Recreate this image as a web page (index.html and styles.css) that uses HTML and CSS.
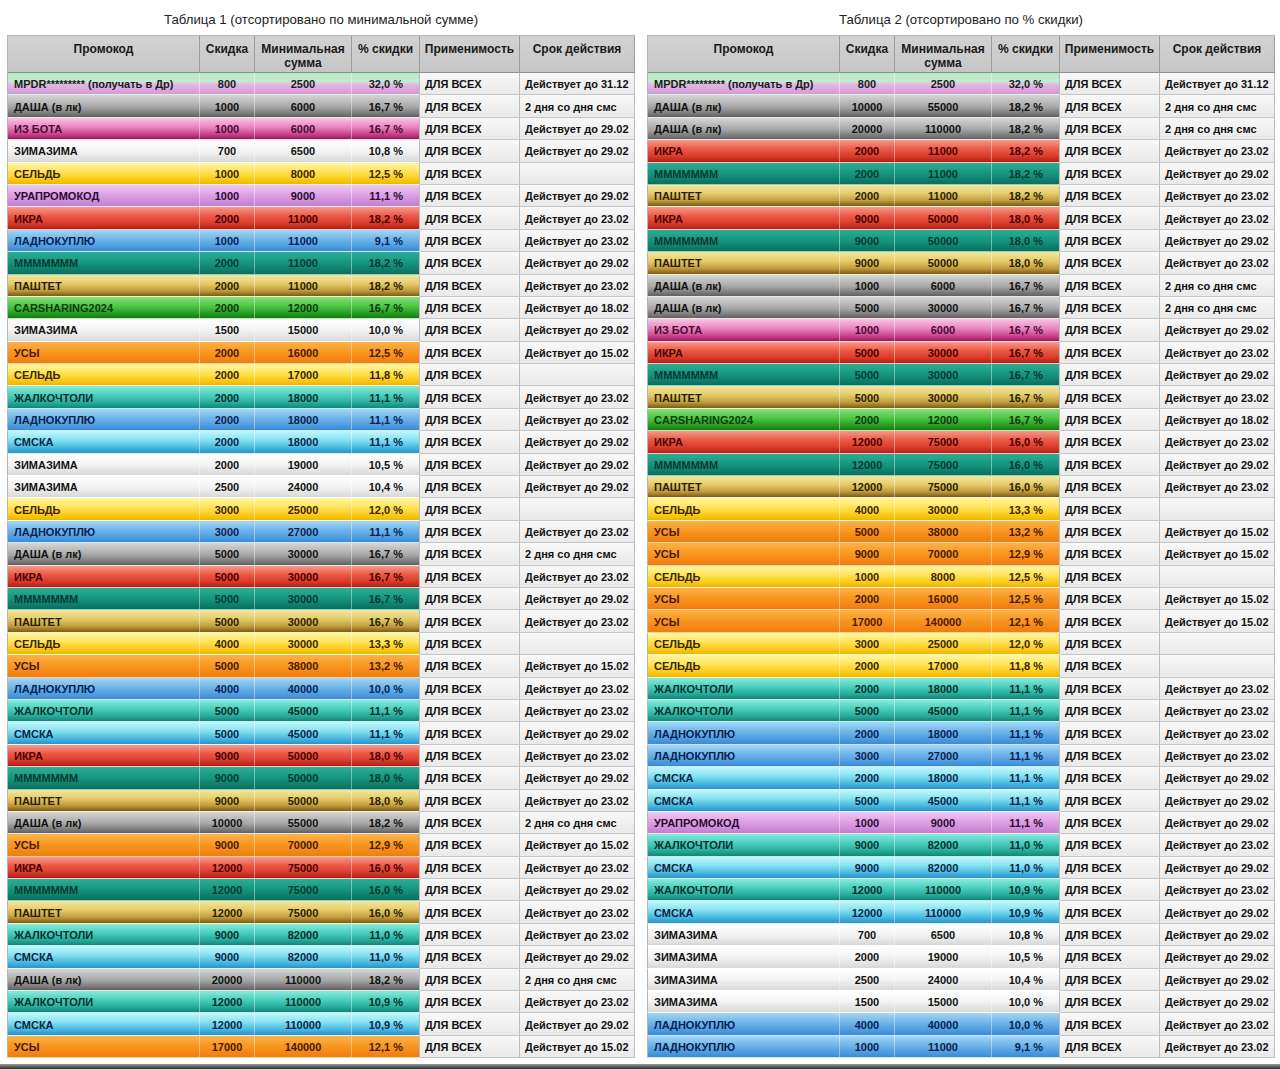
FILE: index.html
```html
<!DOCTYPE html>
<html lang="ru">
<head>
<meta charset="utf-8">
<title>Промокоды</title>
<link rel="stylesheet" href="styles.css">
</head>
<body>
<div class="page">
  <section class="block">
    <h2 class="title">Таблица 1 (отсортировано по минимальной сумме)</h2>
    <div class="tbl">
      <div class="hd"><span>Промокод</span><span>Скидка</span><span>Минимальная сумма</span><span>% скидки</span><span>Применимость</span><span>Срок действия</span></div>
      <div class="r mpdr"><span>MPDR********* (получать в Др)</span><span>800</span><span>2500</span><span>32,0 %</span><span>ДЛЯ ВСЕХ</span><span>Действует до 31.12</span></div>
      <div class="r dasha"><span>ДАША (в лк)</span><span>1000</span><span>6000</span><span>16,7 %</span><span>ДЛЯ ВСЕХ</span><span>2 дня со дня смс</span></div>
      <div class="r izbota"><span>ИЗ БОТА</span><span>1000</span><span>6000</span><span>16,7 %</span><span>ДЛЯ ВСЕХ</span><span>Действует до 29.02</span></div>
      <div class="r zima"><span>ЗИМАЗИМА</span><span>700</span><span>6500</span><span>10,8 %</span><span>ДЛЯ ВСЕХ</span><span>Действует до 29.02</span></div>
      <div class="r seld"><span>СЕЛЬДЬ</span><span>1000</span><span>8000</span><span>12,5 %</span><span>ДЛЯ ВСЕХ</span><span></span></div>
      <div class="r ura"><span>УРАПРОМОКОД</span><span>1000</span><span>9000</span><span>11,1 %</span><span>ДЛЯ ВСЕХ</span><span>Действует до 29.02</span></div>
      <div class="r ikra"><span>ИКРА</span><span>2000</span><span>11000</span><span>18,2 %</span><span>ДЛЯ ВСЕХ</span><span>Действует до 23.02</span></div>
      <div class="r ladno"><span>ЛАДНОКУПЛЮ</span><span>1000</span><span>11000</span><span>9,1 %</span><span>ДЛЯ ВСЕХ</span><span>Действует до 23.02</span></div>
      <div class="r mmm"><span>МММММММ</span><span>2000</span><span>11000</span><span>18,2 %</span><span>ДЛЯ ВСЕХ</span><span>Действует до 29.02</span></div>
      <div class="r pashtet"><span>ПАШТЕТ</span><span>2000</span><span>11000</span><span>18,2 %</span><span>ДЛЯ ВСЕХ</span><span>Действует до 23.02</span></div>
      <div class="r car"><span>CARSHARING2024</span><span>2000</span><span>12000</span><span>16,7 %</span><span>ДЛЯ ВСЕХ</span><span>Действует до 18.02</span></div>
      <div class="r zima"><span>ЗИМАЗИМА</span><span>1500</span><span>15000</span><span>10,0 %</span><span>ДЛЯ ВСЕХ</span><span>Действует до 29.02</span></div>
      <div class="r usy"><span>УСЫ</span><span>2000</span><span>16000</span><span>12,5 %</span><span>ДЛЯ ВСЕХ</span><span>Действует до 15.02</span></div>
      <div class="r seld"><span>СЕЛЬДЬ</span><span>2000</span><span>17000</span><span>11,8 %</span><span>ДЛЯ ВСЕХ</span><span></span></div>
      <div class="r zhalko"><span>ЖАЛКОЧТОЛИ</span><span>2000</span><span>18000</span><span>11,1 %</span><span>ДЛЯ ВСЕХ</span><span>Действует до 23.02</span></div>
      <div class="r ladno"><span>ЛАДНОКУПЛЮ</span><span>2000</span><span>18000</span><span>11,1 %</span><span>ДЛЯ ВСЕХ</span><span>Действует до 23.02</span></div>
      <div class="r smska"><span>СМСКА</span><span>2000</span><span>18000</span><span>11,1 %</span><span>ДЛЯ ВСЕХ</span><span>Действует до 29.02</span></div>
      <div class="r zima"><span>ЗИМАЗИМА</span><span>2000</span><span>19000</span><span>10,5 %</span><span>ДЛЯ ВСЕХ</span><span>Действует до 29.02</span></div>
      <div class="r zima"><span>ЗИМАЗИМА</span><span>2500</span><span>24000</span><span>10,4 %</span><span>ДЛЯ ВСЕХ</span><span>Действует до 29.02</span></div>
      <div class="r seld"><span>СЕЛЬДЬ</span><span>3000</span><span>25000</span><span>12,0 %</span><span>ДЛЯ ВСЕХ</span><span></span></div>
      <div class="r ladno"><span>ЛАДНОКУПЛЮ</span><span>3000</span><span>27000</span><span>11,1 %</span><span>ДЛЯ ВСЕХ</span><span>Действует до 23.02</span></div>
      <div class="r dasha"><span>ДАША (в лк)</span><span>5000</span><span>30000</span><span>16,7 %</span><span>ДЛЯ ВСЕХ</span><span>2 дня со дня смс</span></div>
      <div class="r ikra"><span>ИКРА</span><span>5000</span><span>30000</span><span>16,7 %</span><span>ДЛЯ ВСЕХ</span><span>Действует до 23.02</span></div>
      <div class="r mmm"><span>МММММММ</span><span>5000</span><span>30000</span><span>16,7 %</span><span>ДЛЯ ВСЕХ</span><span>Действует до 29.02</span></div>
      <div class="r pashtet"><span>ПАШТЕТ</span><span>5000</span><span>30000</span><span>16,7 %</span><span>ДЛЯ ВСЕХ</span><span>Действует до 23.02</span></div>
      <div class="r seld"><span>СЕЛЬДЬ</span><span>4000</span><span>30000</span><span>13,3 %</span><span>ДЛЯ ВСЕХ</span><span></span></div>
      <div class="r usy"><span>УСЫ</span><span>5000</span><span>38000</span><span>13,2 %</span><span>ДЛЯ ВСЕХ</span><span>Действует до 15.02</span></div>
      <div class="r ladno"><span>ЛАДНОКУПЛЮ</span><span>4000</span><span>40000</span><span>10,0 %</span><span>ДЛЯ ВСЕХ</span><span>Действует до 23.02</span></div>
      <div class="r zhalko"><span>ЖАЛКОЧТОЛИ</span><span>5000</span><span>45000</span><span>11,1 %</span><span>ДЛЯ ВСЕХ</span><span>Действует до 23.02</span></div>
      <div class="r smska"><span>СМСКА</span><span>5000</span><span>45000</span><span>11,1 %</span><span>ДЛЯ ВСЕХ</span><span>Действует до 29.02</span></div>
      <div class="r ikra"><span>ИКРА</span><span>9000</span><span>50000</span><span>18,0 %</span><span>ДЛЯ ВСЕХ</span><span>Действует до 23.02</span></div>
      <div class="r mmm"><span>МММММММ</span><span>9000</span><span>50000</span><span>18,0 %</span><span>ДЛЯ ВСЕХ</span><span>Действует до 29.02</span></div>
      <div class="r pashtet"><span>ПАШТЕТ</span><span>9000</span><span>50000</span><span>18,0 %</span><span>ДЛЯ ВСЕХ</span><span>Действует до 23.02</span></div>
      <div class="r dasha"><span>ДАША (в лк)</span><span>10000</span><span>55000</span><span>18,2 %</span><span>ДЛЯ ВСЕХ</span><span>2 дня со дня смс</span></div>
      <div class="r usy"><span>УСЫ</span><span>9000</span><span>70000</span><span>12,9 %</span><span>ДЛЯ ВСЕХ</span><span>Действует до 15.02</span></div>
      <div class="r ikra"><span>ИКРА</span><span>12000</span><span>75000</span><span>16,0 %</span><span>ДЛЯ ВСЕХ</span><span>Действует до 23.02</span></div>
      <div class="r mmm"><span>МММММММ</span><span>12000</span><span>75000</span><span>16,0 %</span><span>ДЛЯ ВСЕХ</span><span>Действует до 29.02</span></div>
      <div class="r pashtet"><span>ПАШТЕТ</span><span>12000</span><span>75000</span><span>16,0 %</span><span>ДЛЯ ВСЕХ</span><span>Действует до 23.02</span></div>
      <div class="r zhalko"><span>ЖАЛКОЧТОЛИ</span><span>9000</span><span>82000</span><span>11,0 %</span><span>ДЛЯ ВСЕХ</span><span>Действует до 23.02</span></div>
      <div class="r smska"><span>СМСКА</span><span>9000</span><span>82000</span><span>11,0 %</span><span>ДЛЯ ВСЕХ</span><span>Действует до 29.02</span></div>
      <div class="r dasha"><span>ДАША (в лк)</span><span>20000</span><span>110000</span><span>18,2 %</span><span>ДЛЯ ВСЕХ</span><span>2 дня со дня смс</span></div>
      <div class="r zhalko"><span>ЖАЛКОЧТОЛИ</span><span>12000</span><span>110000</span><span>10,9 %</span><span>ДЛЯ ВСЕХ</span><span>Действует до 23.02</span></div>
      <div class="r smska"><span>СМСКА</span><span>12000</span><span>110000</span><span>10,9 %</span><span>ДЛЯ ВСЕХ</span><span>Действует до 29.02</span></div>
      <div class="r usy"><span>УСЫ</span><span>17000</span><span>140000</span><span>12,1 %</span><span>ДЛЯ ВСЕХ</span><span>Действует до 15.02</span></div>
    </div>
  </section>

  <section class="block">
    <h2 class="title">Таблица 2 (отсортировано по % скидки)</h2>
    <div class="tbl">
      <div class="hd"><span>Промокод</span><span>Скидка</span><span>Минимальная сумма</span><span>% скидки</span><span>Применимость</span><span>Срок действия</span></div>
      <div class="r mpdr"><span>MPDR********* (получать в Др)</span><span>800</span><span>2500</span><span>32,0 %</span><span>ДЛЯ ВСЕХ</span><span>Действует до 31.12</span></div>
      <div class="r dasha"><span>ДАША (в лк)</span><span>10000</span><span>55000</span><span>18,2 %</span><span>ДЛЯ ВСЕХ</span><span>2 дня со дня смс</span></div>
      <div class="r dasha"><span>ДАША (в лк)</span><span>20000</span><span>110000</span><span>18,2 %</span><span>ДЛЯ ВСЕХ</span><span>2 дня со дня смс</span></div>
      <div class="r ikra"><span>ИКРА</span><span>2000</span><span>11000</span><span>18,2 %</span><span>ДЛЯ ВСЕХ</span><span>Действует до 23.02</span></div>
      <div class="r mmm"><span>МММММММ</span><span>2000</span><span>11000</span><span>18,2 %</span><span>ДЛЯ ВСЕХ</span><span>Действует до 29.02</span></div>
      <div class="r pashtet"><span>ПАШТЕТ</span><span>2000</span><span>11000</span><span>18,2 %</span><span>ДЛЯ ВСЕХ</span><span>Действует до 23.02</span></div>
      <div class="r ikra"><span>ИКРА</span><span>9000</span><span>50000</span><span>18,0 %</span><span>ДЛЯ ВСЕХ</span><span>Действует до 23.02</span></div>
      <div class="r mmm"><span>МММММММ</span><span>9000</span><span>50000</span><span>18,0 %</span><span>ДЛЯ ВСЕХ</span><span>Действует до 29.02</span></div>
      <div class="r pashtet"><span>ПАШТЕТ</span><span>9000</span><span>50000</span><span>18,0 %</span><span>ДЛЯ ВСЕХ</span><span>Действует до 23.02</span></div>
      <div class="r dasha"><span>ДАША (в лк)</span><span>1000</span><span>6000</span><span>16,7 %</span><span>ДЛЯ ВСЕХ</span><span>2 дня со дня смс</span></div>
      <div class="r dasha"><span>ДАША (в лк)</span><span>5000</span><span>30000</span><span>16,7 %</span><span>ДЛЯ ВСЕХ</span><span>2 дня со дня смс</span></div>
      <div class="r izbota"><span>ИЗ БОТА</span><span>1000</span><span>6000</span><span>16,7 %</span><span>ДЛЯ ВСЕХ</span><span>Действует до 29.02</span></div>
      <div class="r ikra"><span>ИКРА</span><span>5000</span><span>30000</span><span>16,7 %</span><span>ДЛЯ ВСЕХ</span><span>Действует до 23.02</span></div>
      <div class="r mmm"><span>МММММММ</span><span>5000</span><span>30000</span><span>16,7 %</span><span>ДЛЯ ВСЕХ</span><span>Действует до 29.02</span></div>
      <div class="r pashtet"><span>ПАШТЕТ</span><span>5000</span><span>30000</span><span>16,7 %</span><span>ДЛЯ ВСЕХ</span><span>Действует до 23.02</span></div>
      <div class="r car"><span>CARSHARING2024</span><span>2000</span><span>12000</span><span>16,7 %</span><span>ДЛЯ ВСЕХ</span><span>Действует до 18.02</span></div>
      <div class="r ikra"><span>ИКРА</span><span>12000</span><span>75000</span><span>16,0 %</span><span>ДЛЯ ВСЕХ</span><span>Действует до 23.02</span></div>
      <div class="r mmm"><span>МММММММ</span><span>12000</span><span>75000</span><span>16,0 %</span><span>ДЛЯ ВСЕХ</span><span>Действует до 29.02</span></div>
      <div class="r pashtet"><span>ПАШТЕТ</span><span>12000</span><span>75000</span><span>16,0 %</span><span>ДЛЯ ВСЕХ</span><span>Действует до 23.02</span></div>
      <div class="r seld"><span>СЕЛЬДЬ</span><span>4000</span><span>30000</span><span>13,3 %</span><span>ДЛЯ ВСЕХ</span><span></span></div>
      <div class="r usy"><span>УСЫ</span><span>5000</span><span>38000</span><span>13,2 %</span><span>ДЛЯ ВСЕХ</span><span>Действует до 15.02</span></div>
      <div class="r usy"><span>УСЫ</span><span>9000</span><span>70000</span><span>12,9 %</span><span>ДЛЯ ВСЕХ</span><span>Действует до 15.02</span></div>
      <div class="r seld"><span>СЕЛЬДЬ</span><span>1000</span><span>8000</span><span>12,5 %</span><span>ДЛЯ ВСЕХ</span><span></span></div>
      <div class="r usy"><span>УСЫ</span><span>2000</span><span>16000</span><span>12,5 %</span><span>ДЛЯ ВСЕХ</span><span>Действует до 15.02</span></div>
      <div class="r usy"><span>УСЫ</span><span>17000</span><span>140000</span><span>12,1 %</span><span>ДЛЯ ВСЕХ</span><span>Действует до 15.02</span></div>
      <div class="r seld"><span>СЕЛЬДЬ</span><span>3000</span><span>25000</span><span>12,0 %</span><span>ДЛЯ ВСЕХ</span><span></span></div>
      <div class="r seld"><span>СЕЛЬДЬ</span><span>2000</span><span>17000</span><span>11,8 %</span><span>ДЛЯ ВСЕХ</span><span></span></div>
      <div class="r zhalko"><span>ЖАЛКОЧТОЛИ</span><span>2000</span><span>18000</span><span>11,1 %</span><span>ДЛЯ ВСЕХ</span><span>Действует до 23.02</span></div>
      <div class="r zhalko"><span>ЖАЛКОЧТОЛИ</span><span>5000</span><span>45000</span><span>11,1 %</span><span>ДЛЯ ВСЕХ</span><span>Действует до 23.02</span></div>
      <div class="r ladno"><span>ЛАДНОКУПЛЮ</span><span>2000</span><span>18000</span><span>11,1 %</span><span>ДЛЯ ВСЕХ</span><span>Действует до 23.02</span></div>
      <div class="r ladno"><span>ЛАДНОКУПЛЮ</span><span>3000</span><span>27000</span><span>11,1 %</span><span>ДЛЯ ВСЕХ</span><span>Действует до 23.02</span></div>
      <div class="r smska"><span>СМСКА</span><span>2000</span><span>18000</span><span>11,1 %</span><span>ДЛЯ ВСЕХ</span><span>Действует до 29.02</span></div>
      <div class="r smska"><span>СМСКА</span><span>5000</span><span>45000</span><span>11,1 %</span><span>ДЛЯ ВСЕХ</span><span>Действует до 29.02</span></div>
      <div class="r ura"><span>УРАПРОМОКОД</span><span>1000</span><span>9000</span><span>11,1 %</span><span>ДЛЯ ВСЕХ</span><span>Действует до 29.02</span></div>
      <div class="r zhalko"><span>ЖАЛКОЧТОЛИ</span><span>9000</span><span>82000</span><span>11,0 %</span><span>ДЛЯ ВСЕХ</span><span>Действует до 23.02</span></div>
      <div class="r smska"><span>СМСКА</span><span>9000</span><span>82000</span><span>11,0 %</span><span>ДЛЯ ВСЕХ</span><span>Действует до 29.02</span></div>
      <div class="r zhalko"><span>ЖАЛКОЧТОЛИ</span><span>12000</span><span>110000</span><span>10,9 %</span><span>ДЛЯ ВСЕХ</span><span>Действует до 23.02</span></div>
      <div class="r smska"><span>СМСКА</span><span>12000</span><span>110000</span><span>10,9 %</span><span>ДЛЯ ВСЕХ</span><span>Действует до 29.02</span></div>
      <div class="r zima"><span>ЗИМАЗИМА</span><span>700</span><span>6500</span><span>10,8 %</span><span>ДЛЯ ВСЕХ</span><span>Действует до 29.02</span></div>
      <div class="r zima"><span>ЗИМАЗИМА</span><span>2000</span><span>19000</span><span>10,5 %</span><span>ДЛЯ ВСЕХ</span><span>Действует до 29.02</span></div>
      <div class="r zima"><span>ЗИМАЗИМА</span><span>2500</span><span>24000</span><span>10,4 %</span><span>ДЛЯ ВСЕХ</span><span>Действует до 29.02</span></div>
      <div class="r zima"><span>ЗИМАЗИМА</span><span>1500</span><span>15000</span><span>10,0 %</span><span>ДЛЯ ВСЕХ</span><span>Действует до 29.02</span></div>
      <div class="r ladno"><span>ЛАДНОКУПЛЮ</span><span>4000</span><span>40000</span><span>10,0 %</span><span>ДЛЯ ВСЕХ</span><span>Действует до 23.02</span></div>
      <div class="r ladno"><span>ЛАДНОКУПЛЮ</span><span>1000</span><span>11000</span><span>9,1 %</span><span>ДЛЯ ВСЕХ</span><span>Действует до 23.02</span></div>
    </div>
  </section>
</div>
<div class="bottom-bar"></div>
</body>
</html>
```

FILE: styles.css
```css
html, body {
  margin: 0;
  padding: 0;
  background: #ffffff;
}

body {
  font-family: "Liberation Sans", Arial, sans-serif;
  color: #111;
  height: 1069px;
  overflow: hidden;
}

.page {
  display: flex;
  gap: 12px;
  padding-left: 7px;
}

.block {
  width: 628px;
  display: flex;
  flex-direction: column;
}

.title {
  margin: 0;
  height: 35px;
  padding-top: 12px;
  box-sizing: border-box;
  font-size: 13.2px;
  line-height: 16px;
  font-weight: normal;
  text-align: center;
  color: #222;
}

.tbl {
  display: flex;
  flex-direction: column;
}

.hd,
.r {
  display: grid;
  grid-template-columns: 193px 55px 97px 68px 100px 115px;
}

.hd {
  height: 38px;
}

.hd > span {
  box-sizing: border-box;
  padding-top: 6px;
  text-align: center;
  font-size: 12px;
  line-height: 14px;
  font-weight: bold;
  color: #1a1a1a;
  background: linear-gradient(#d2d2d2, #c6c6c6);
  border-right: 1px solid #9c9c9c;
  border-bottom: 1px solid #8e8e8e;
  border-top: 1px solid #b4b4b4;
}

.hd > span:first-child,
.r > span:first-child {
  border-left: 1px solid #b4b4b4;
}

.r {
  height: 22.4px;
}

.r > span {
  box-sizing: border-box;
  display: flex;
  align-items: center;
  padding-top: 1px;
  white-space: nowrap;
  overflow: hidden;
  font-size: 11px;
  font-weight: bold;
  border-right: 1px solid rgba(255, 255, 255, 0.4);
  border-bottom: 1px solid rgba(255, 255, 255, 0.45);
}

.r > span:nth-child(1) {
  padding-left: 6px;
}

.r > span:nth-child(2),
.r > span:nth-child(3) {
  justify-content: center;
}

.r > span:nth-child(4) {
  justify-content: flex-end;
  padding-right: 16px;
}

.r > span:nth-child(n+5) {
  padding-left: 5px;
  color: #111;
  background: linear-gradient(#f8f8f8, #e9e9e9);
  border-right: 1px solid #bcbcbc;
  border-bottom: 1px solid #c6c6c6;
}

.r > span:nth-child(4) {
  border-right-color: #bcbcbc;
}

/* category colours */
.mpdr > span:nth-child(-n+4) {
  background: linear-gradient(#b4eec2 0%, #c4ead0 42%, #e4b6e6 55%, #d49ad8 100%);
  color: #1a1a1a;
}
.dasha > span:nth-child(-n+4) {
  background: linear-gradient(#d6d6d6 0%, #a6a6a6 55%, #616161 100%);
  color: #111;
}
.izbota > span:nth-child(-n+4) {
  background: linear-gradient(#fbc4e2 0%, #e882bf 45%, #c43e88 80%, #9a1858 100%);
  color: #4a0a30;
}
.zima > span:nth-child(-n+4) {
  background: linear-gradient(#ffffff 0%, #f3f3f3 50%, #d8d8d8 100%);
  color: #111;
}
.seld > span:nth-child(-n+4) {
  background: linear-gradient(#fff6a2 0%, #ffe45c 40%, #fbcc1c 75%, #f0b400 100%);
  color: #3a2600;
}
.ura > span:nth-child(-n+4) {
  background: linear-gradient(#f2c8f4 0%, #dc9ee2 50%, #c47ece 100%);
  color: #2a0a34;
}
.ikra > span:nth-child(-n+4) {
  background: linear-gradient(#f69a8a 0%, #ec5a48 40%, #d83a2a 75%, #b02016 100%);
  color: #4a0000;
}
.ladno > span:nth-child(-n+4) {
  background: linear-gradient(#a4d6f6 0%, #6cb4ea 45%, #3a8ad6 100%);
  color: #0a1e50;
}
.mmm > span:nth-child(-n+4) {
  background: linear-gradient(#2cae96 0%, #15957f 50%, #0b6f5d 100%);
  color: #053a30;
}
.pashtet > span:nth-child(-n+4) {
  background: linear-gradient(#f4e6a0 0%, #e6cc6a 40%, #c09a3a 75%, #7a5a18 100%);
  color: #2a1e00;
}
.car > span:nth-child(-n+4) {
  background: linear-gradient(#86e07a 0%, #4cc444 45%, #2aa024 75%, #157a14 100%);
  color: #0a3a0a;
}
.usy > span:nth-child(-n+4) {
  background: linear-gradient(#fbb24a 0%, #f8961e 50%, #f07c10 100%);
  color: #4a1800;
}
.zhalko > span:nth-child(-n+4) {
  background: linear-gradient(#8aeadc 0%, #4cd0bf 40%, #28ad9d 75%, #13857a 100%);
  color: #06302c;
}
.smska > span:nth-child(-n+4) {
  background: linear-gradient(#c6f6fc 0%, #86e2f2 40%, #48b8e0 75%, #2a92cc 100%);
  color: #0a2646;
}

.bottom-bar {
  margin-top: 6px;
  height: 5px;
  background: linear-gradient(#9a9a9a, #2e2e2e);
}
```
